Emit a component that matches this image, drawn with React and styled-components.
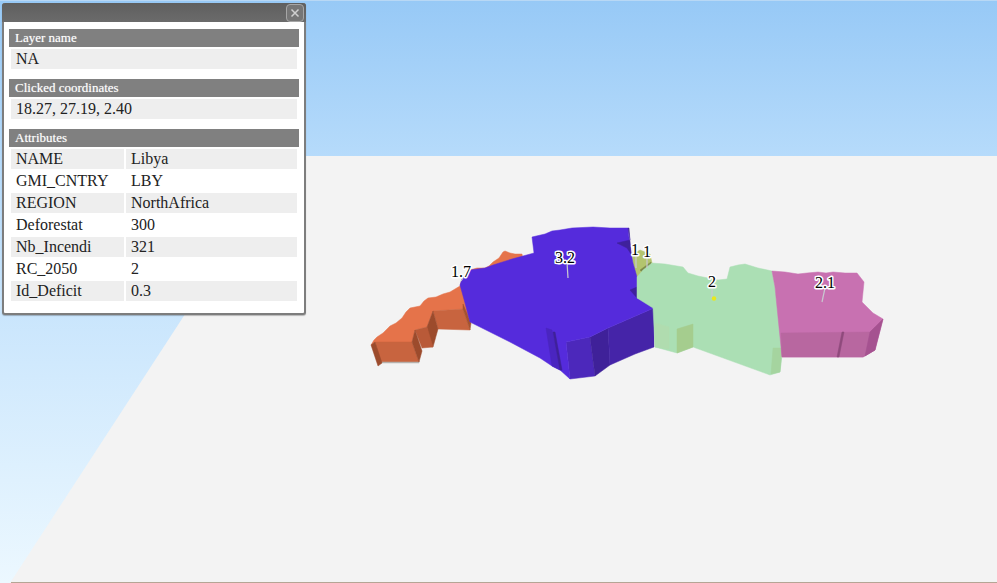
import React from "react";
import styled, { createGlobalStyle } from "styled-components";

const Global = createGlobalStyle`
  html, body { margin: 0; padding: 0; background: #f3f3f3; }
  body { width: 997px; height: 583px; overflow: hidden; font-family: "Liberation Serif", "Times New Roman", serif; }
`;
const Page = styled.div`
  position: relative;
  width: 997px;
  height: 583px;
  overflow: hidden;
  background: linear-gradient(180deg, #97c9f6 0%, #b6dbfb 27%, #ecf8ff 100%);
`;
const Scene = styled.svg`
  position: absolute;
  inset: 0;
  display: block;
`;
const Label = styled.text`
  font-family: "Liberation Serif", "Times New Roman", serif;
  font-size: 16px;
  fill: #000;
  stroke: #fff;
  stroke-width: 3px;
  stroke-linejoin: round;
  paint-order: stroke;
  text-anchor: middle;
`;
const Popup = styled.div`
  position: absolute;
  left: 2px;
  top: 3px;
  width: 300px;
  height: 310px;
  background: #fff;
  border: 2px solid #7d7d7d;
  border-top: 0;
  border-radius: 3px;
  box-shadow: 0 1px 1px rgba(0, 0, 0, 0.25);
  display: flex;
  flex-direction: column;
`;
const TitleBar = styled.div`
  height: 19px;
  flex: none;
  background: linear-gradient(180deg, #5f5f5f, #6b6b6b);
  border-radius: 3px 3px 0 0;
  display: flex;
  justify-content: flex-end;
  margin: 0 -2px;
  padding-right: 2px;
`;
const CloseBox = styled.button`
  width: 18px;
  height: 18px;
  margin-top: 1px;
  padding: 0;
  background: #767676;
  border: 1px solid #a6a6a6;
  border-radius: 4px;
  display: flex;
  align-items: center;
  justify-content: center;
`;
const Body = styled.div`
  padding: 7px 5px 0;
  display: flex;
  flex-direction: column;
  gap: 10px;
`;
const Section = styled.section`
  display: flex;
  flex-direction: column;
`;
const SectionHead = styled.div`
  height: 18px;
  line-height: 18px;
  background: #808080;
  color: #fff;
  font-size: 13px;
  padding-left: 6px;
  text-shadow: 0 0 1px rgba(255, 255, 255, 0.5);
`;
const Value = styled.div`
  margin: 2px 2px 0;
  height: 20px;
  line-height: 20px;
  background: #eee;
  color: #222;
  font-size: 16px;
  padding-left: 5px;
`;
const Grid = styled.div`
  display: grid;
  grid-template-columns: 113px 171px;
  column-gap: 2px;
  row-gap: 2px;
  margin: 2px 2px 0;
`;
const Cell = styled.div`
  height: 20px;
  line-height: 20px;
  font-size: 16px;
  color: #222;
  padding-left: 5px;
  background: ${(p) => (p.$shaded ? "#eee" : "#fff")};
`;

const rows = [
  ["NAME", "Libya"],
  ["GMI_CNTRY", "LBY"],
  ["REGION", "NorthAfrica"],
  ["Deforestat", "300"],
  ["Nb_Incendi", "321"],
  ["RC_2050", "2"],
  ["Id_Deficit", "0.3"],
];

const pts = (a) => a.map((p) => p.join(",")).join(" ");

const shapes = [
  // Morocco
  ["#e5734a", [[371,345],[374,340],[377,337],[383,333],[390,326],[396,323],[402,318],[406,312],[410,308],[415,307],[420,306],[424,301],[428,298],[436,297],[443,294],[450,292],[460,286],[462,279],[470,270],[477,268],[485,268],[489,266],[493,262],[499,258],[503,252],[505,251],[510,253],[515,254],[522,254],[530,300],[472,322],[463,309],[433,311],[427,327],[415,330],[412,342],[375,342]]],
  ["#c8643f", [[375,342],[412,342],[419,362],[380,362]]],
  ["#b5b0ac", [[380,362],[419,362],[419,363],[380,363]]],
  ["#9c4b2c", [[371,345],[375,342],[382,363],[378,366]]],
  ["#c8643f", [[433,311],[463,309],[470,330],[438,329]]],
  ["#a5522f", [[463,304],[471,323],[470,330],[463,309]]],
  ["#9c4b2c", [[427,327],[433,311],[438,329],[433,347],[428,346]]],
  ["#b95a38", [[415,330],[427,327],[433,347],[422,348]]],
  ["#9c4b2c", [[412,342],[415,330],[422,351],[419,362]]],
  // Tunisia
  ["#b3c46e", [[632,255],[640,250],[650,254],[652,263],[645,268],[638,279],[634,270]]],
  ["#7d8a4a", [[640,270],[651,262],[651,266],[642,272]]],
  // Algeria front faces
  ["#4c28bb", [[566,342],[590,337],[595,376],[570,379]]],
  ["#3f2199", [[590,337],[608,328],[610,365],[595,376]]],
  ["#4524a8", [[608,328],[654,308],[654,347],[635,354],[610,365]]],
  // Algeria top
  ["#552bdc", [[532,237],[545,234],[552,231],[560,230],[572,228],[593,227],[610,228],[628,228],[630,247],[633,263],[637,277],[637,298],[648,303],[653,306],[654,308],[608,328],[590,337],[566,342],[570,379],[560,370],[552,366],[540,358],[510,342],[470,322],[465,303],[460,285],[462,279],[470,270],[485,268],[493,265],[512,259],[534,253]]],
  ["#4a25c0", [[546,328],[552,330],[560,370],[552,366]]],
  ["#3f2199", [[553,332],[555,332],[562,370],[560,370]]],
  ["#3f219c", [[628,228],[630,240],[617,243],[627,248],[631,254],[629,228]]],
  ["#3f219c", [[630,290],[637,287],[637,298]]],
  // Libya
  ["#abdfb4", [[637,277],[643,270],[652,263],[665,264],[683,267],[688,273],[698,276],[708,278],[718,280],[727,279],[730,267],[738,265],[745,264],[758,268],[772,271],[775,287],[783,347],[780,372],[770,375],[693,347],[677,353],[655,347],[653,308],[637,298]]],
  ["#a5cd8e", [[677,329],[693,324],[693,347],[677,353]]],
  ["#b0dcaf", [[655,323],[669,327],[669,349],[655,347]]],
  ["#a5d49f", [[773,348],[782,348],[780,372],[771,374]]],
  // Egypt
  ["#c871b1", [[772,271],[785,272],[798,274],[807,273],[818,272],[826,273],[833,272],[845,273],[857,273],[864,282],[862,302],[873,313],[883,319],[875,350],[863,357],[782,357],[775,287]]],
  ["#b867a0", [[781,333],[870,332],[875,327],[875,350],[863,357],[782,357]]],
  ["#a55290", [[870,332],[875,327],[883,319],[875,350],[865,356]]],
  ["#8f4a7c", [[842,332],[844,332],[839,357],[837,357]]],
];

const stems = [
  [567,262,568,278],
  [636,254,636,268],
  [647,256,647,268],
  [712,288,712,298],
  [825,288,822,302],
  [463,278,461,281],
];

const labels = [
  ["1.7", 461, 277],
  ["3.2", 565, 263],
  ["1", 635, 255],
  ["1", 647, 257],
  ["2", 712, 287],
  ["2.1", 825, 288],
];

export default function App() {
  return (
    <Page>
      <Global />
      <Scene width="997" height="583" viewBox="0 0 997 583">
        <rect x="0" y="0" width="997" height="1" fill="#b8d8f5" />
        <polygon points="288,156 997,156 997,583 10,583" fill="#f3f3f3" />
        <rect x="11" y="582" width="986" height="1" fill="#b5a595" />
        {shapes.map(([c, p], i) => (
          <polygon key={i} points={pts(p)} fill={c} stroke={c} strokeWidth="0.5" strokeLinejoin="round" />
        ))}
        {stems.map(([a, b, c, d], i) => (
          <line key={i} x1={a} y1={b} x2={c} y2={d} stroke="#c8c8d0" strokeWidth="1.2" />
        ))}
        <circle cx="714" cy="298.5" r="2.2" fill="#e8e81e" />
        {labels.map(([t, x, y], i) => (
          <Label key={i} x={x} y={y}>{t}</Label>
        ))}
      </Scene>
      <Popup>
        <TitleBar>
          <CloseBox aria-label="close">
            <svg width="10" height="10" viewBox="0 0 10 10">
              <path d="M1.5 1.5 L8.5 8.5 M8.5 1.5 L1.5 8.5" stroke="#d0d0d0" strokeWidth="1.5" />
            </svg>
          </CloseBox>
        </TitleBar>
        <Body>
          <Section>
            <SectionHead>Layer name</SectionHead>
            <Value>NA</Value>
          </Section>
          <Section>
            <SectionHead>Clicked coordinates</SectionHead>
            <Value>18.27, 27.19, 2.40</Value>
          </Section>
          <Section>
            <SectionHead>Attributes</SectionHead>
            <Grid>
              {rows.map(([k, v], i) => (
                <React.Fragment key={k}>
                  <Cell $shaded={i % 2 === 0}>{k}</Cell>
                  <Cell $shaded={i % 2 === 0}>{v}</Cell>
                </React.Fragment>
              ))}
            </Grid>
          </Section>
        </Body>
      </Popup>
    </Page>
  );
}
